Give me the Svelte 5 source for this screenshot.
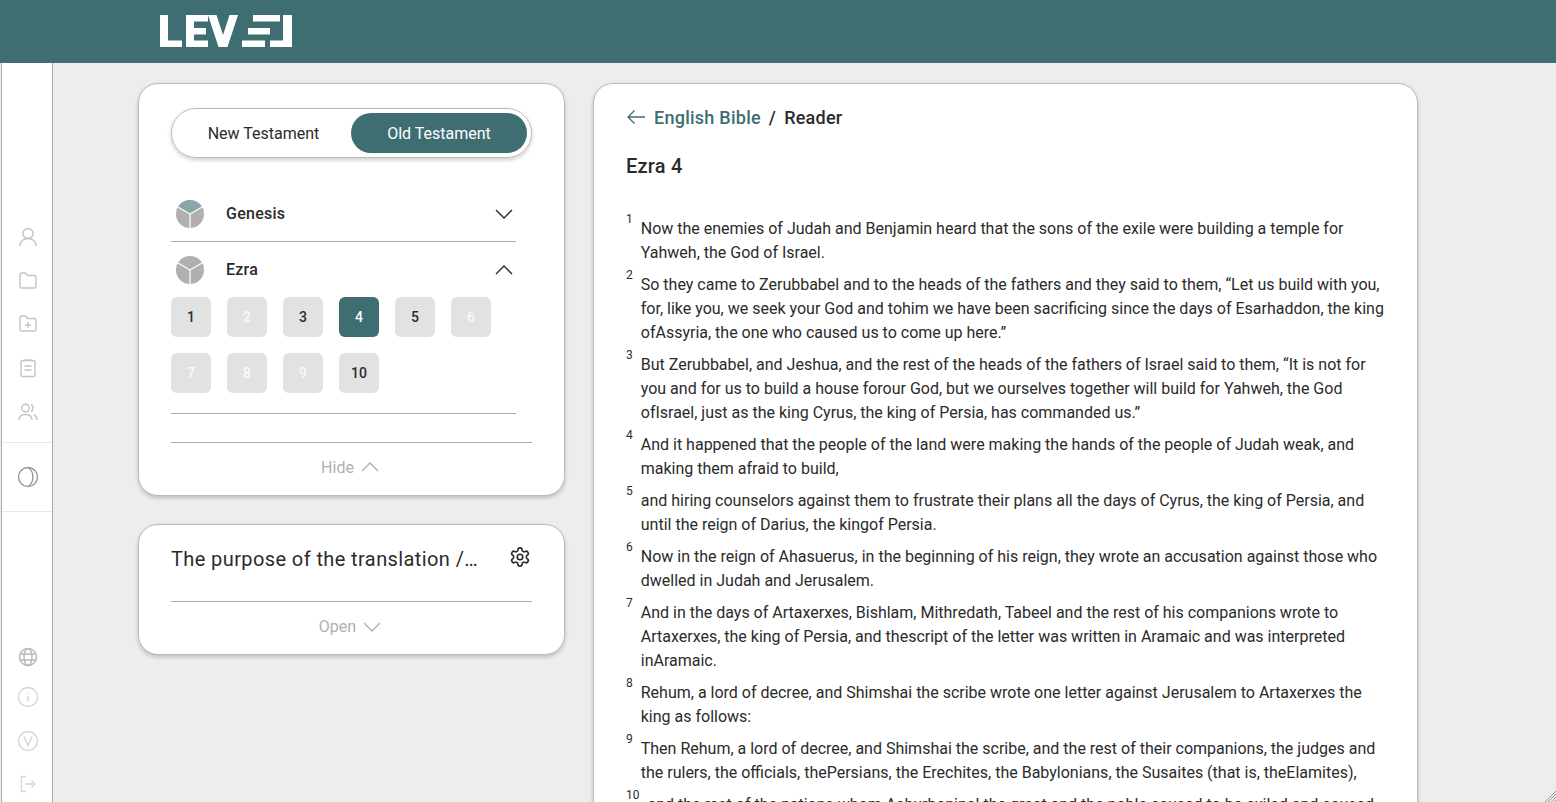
<script>
    const chapters = [
        { n: 1, state: 'on' }, { n: 2, state: 'off' }, { n: 3, state: 'on' }, { n: 4, state: 'current' },
        { n: 5, state: 'on' }, { n: 6, state: 'off' }, { n: 7, state: 'off' }, { n: 8, state: 'off' },
        { n: 9, state: 'off' }, { n: 10, state: 'on' }
    ];

    const verses = [
        'Now the enemies of Judah and Benjamin heard that the sons of the exile were building a temple for Yahweh, the God of Israel.',
        'So they came to Zerubbabel and to the heads of the fathers and they said to them, “Let us build with you, for, like you, we seek your God and tohim we have been sacrificing since the days of Esarhaddon, the king ofAssyria, the one who caused us to come up here.”',
        'But Zerubbabel, and Jeshua, and the rest of the heads of the fathers of Israel said to them, “It is not for you and for us to build a house forour God, but we ourselves together will build for Yahweh, the God ofIsrael, just as the king Cyrus, the king of Persia, has commanded us.”',
        'And it happened that the people of the land were making the hands of the people of Judah weak, and making them afraid to build,',
        'and hiring counselors against them to frustrate their plans all the days of Cyrus, the king of Persia, and until the reign of Darius, the kingof Persia.',
        'Now in the reign of Ahasuerus, in the beginning of his reign, they wrote an accusation against those who dwelled in Judah and Jerusalem.',
        'And in the days of Artaxerxes, Bishlam, Mithredath, Tabeel and the rest of his companions wrote to Artaxerxes, the king of Persia, and thescript of the letter was written in Aramaic and was interpreted inAramaic.',
        'Rehum, a lord of decree, and Shimshai the scribe wrote one letter against Jerusalem to Artaxerxes the king as follows:',
        'Then Rehum, a lord of decree, and Shimshai the scribe, and the rest of their companions, the judges and the rulers, the officials, thePersians, the Erechites, the Babylonians, the Susaites (that is, theElamites),',
        'and the rest of the nations whom Ashurbanipal the great and the noble caused to be exiled and caused to settle in the cities of Samaria.'
    ];
</script>

<div class="page">
    <header class="topbar">
        <svg class="logo" width="134" height="34" viewBox="0 0 134 34" fill="#fff">
            <path d="M0 1h8v25.500h14v6.500H0z" />
            <path d="M26 1h22v6.500H34v6.500h12v6.500H34v6h14v6.500H26z" />
            <path d="M48 1h8.500l6.500 20L69.500 1H78L67.500 33h-9z" />
            <rect x="93" y="1" width="27" height="6.500" />
            <rect x="88" y="14" width="22" height="6.500" />
            <rect x="82" y="26.500" width="23" height="6.500" />
            <path d="M123 1h9v32h-22v-6.500h13z" />
        </svg>
    </header>

    <div class="body">
        <nav class="rail">
            <div class="rail-group top">
                <div class="rail-item">
                    <svg width="20" height="20" viewBox="0 0 20 20"><circle cx="10" cy="6.500" r="5" /><path d="M2 19c0-4.500 3.500-7.500 8-7.500s8 3 8 7.500" /></svg>
                </div>
                <div class="rail-item">
                    <svg width="20" height="20" viewBox="0 1 20 20"><path d="M2 5c0-1 .6-2 2-2h3.500l2 2.500H16c1.200 0 2 .8 2 2V16c0 1.200-.8 2-2 2H4c-1.400 0-2-.8-2-2z" /></svg>
                </div>
                <div class="rail-item">
                    <svg width="20" height="20" viewBox="0 1 20 20"><path d="M2 5c0-1 .6-2 2-2h3.500l2 2.500H16c1.200 0 2 .8 2 2V16c0 1.200-.8 2-2 2H4c-1.400 0-2-.8-2-2z" /><path d="M10 9v6M7 12h6" /></svg>
                </div>
                <div class="rail-item">
                    <svg width="20" height="20" viewBox="0 0 20 20"><rect x="3" y="2.500" width="14" height="16" rx="2" /><path d="M7 1v2M10 1v2M13 1v2M6.500 8h7M6.500 12h7" /></svg>
                </div>
                <div class="rail-item">
                    <svg width="20" height="20" viewBox="0 0 20 20"><circle cx="7.500" cy="6" r="3.800" /><path d="M1 18c0-4 2.500-5.500 6.500-5.500S14 14 14 18" /><path d="M13 2.500c2.500.5 2.800 5.700 0 7M16 13c2 .8 3 2.500 3 5" /></svg>
                </div>
            </div>

            <div class="rail-theme">
                <svg width="22" height="22" viewBox="0 0 22 22"><circle cx="11" cy="11" r="9.500" /><path d="M11 1.500c6.500 3.500 6.500 15.500 0 19" /></svg>
            </div>

            <div class="rail-group bottom">
                <div class="rail-item globe">
                    <svg width="20" height="20" viewBox="0 0 20 20"><circle cx="10" cy="10" r="8.500" /><ellipse cx="10" cy="10" rx="4" ry="8.500" /><path d="M2 7h16M2 13h16" /></svg>
                </div>
                <div class="rail-item faint">
                    <svg width="22" height="22" viewBox="0 0 22 22"><circle cx="11" cy="11" r="9.500" /><path d="M11 10v5.500M11 6.500v1.300" /></svg>
                </div>
                <div class="rail-item faint tall">
                    <svg width="22" height="22" viewBox="0 0 22 22"><circle cx="11" cy="11" r="9.500" /><path d="M7 6.500l4 9 4-9" /></svg>
                </div>
                <div class="rail-item faint last">
                    <svg width="20" height="20" viewBox="0 0 20 20"><path d="M8 2.500H3.500v15H8M7 10h10M13.500 6.500L17 10l-3.500 3.500" /></svg>
                </div>
            </div>
        </nav>

        <main class="content">
            <div class="side">
                <section class="card books">
                    <div class="toggle">
                        <span class="toggle-opt">New Testament</span>
                        <span class="toggle-opt active">Old Testament</span>
                    </div>

                    <div class="book genesis">
                        <svg class="cube" width="28" height="28" viewBox="0 0 28 28">
                            <circle cx="14" cy="14" r="14" fill="#b0b0b0" />
                            <path d="M14 14L1.900 7A14 14 0 0 1 26.100 7Z" fill="#86a8aa" />
                            <path d="M14 14L1.900 7M14 14L26.100 7M14 14V28" stroke="#fff" stroke-width="1.200" fill="none" />
                        </svg>
                        <span class="book-name">Genesis</span>
                        <svg class="chev" width="18" height="10" viewBox="0 0 18 10"><path d="M1 1l8 8 8-8" /></svg>
                    </div>

                    <div class="book ezra">
                        <svg class="cube" width="28" height="28" viewBox="0 0 28 28">
                            <circle cx="14" cy="14" r="14" fill="#b0b0b0" />
                            <path d="M14 14L1.900 7M14 14L26.100 7M14 14V28" stroke="#fff" stroke-width="1.200" fill="none" />
                        </svg>
                        <span class="book-name">Ezra</span>
                        <svg class="chev" width="18" height="10" viewBox="0 0 18 10"><path d="M1 9l8-8 8 8" /></svg>
                    </div>

                    <div class="chapters">
                        {#each chapters as c}
                            <div class="chip {c.state}">{c.n}</div>
                        {/each}
                    </div>

                    <div class="footer-action hide">
                        <span>Hide</span>
                        <svg width="18" height="10" viewBox="0 0 18 10"><path d="M1 9l8-8 8 8" /></svg>
                    </div>
                </section>

                <section class="card purpose">
                    <div class="purpose-head">
                        <span class="purpose-title">The purpose of the translation / interpretation</span>
                        <svg class="gear" width="22" height="22" viewBox="0 0 24 24">
                            <path d="M12.220 2h-.44a2 2 0 0 0-2 2v.18a2 2 0 0 1-1 1.730l-.43.25a2 2 0 0 1-2 0l-.15-.08a2 2 0 0 0-2.730.73l-.22.38a2 2 0 0 0 .73 2.730l.15.1a2 2 0 0 1 1 1.720v.51a2 2 0 0 1-1 1.740l-.15.09a2 2 0 0 0-.73 2.730l.22.38a2 2 0 0 0 2.730.73l.15-.08a2 2 0 0 1 2 0l.43.25a2 2 0 0 1 1 1.730V20a2 2 0 0 0 2 2h.44a2 2 0 0 0 2-2v-.18a2 2 0 0 1 1-1.730l.43-.25a2 2 0 0 1 2 0l.15.08a2 2 0 0 0 2.730-.73l.22-.39a2 2 0 0 0-.73-2.730l-.15-.08a2 2 0 0 1-1-1.740v-.5a2 2 0 0 1 1-1.740l.15-.09a2 2 0 0 0 .73-2.730l-.22-.38a2 2 0 0 0-2.730-.73l-.15.08a2 2 0 0 1-2 0l-.43-.25a2 2 0 0 1-1-1.730V4a2 2 0 0 0-2-2z" />
                            <circle cx="12" cy="12" r="3" />
                        </svg>
                    </div>
                    <div class="footer-action open">
                        <span>Open</span>
                        <svg width="18" height="10" viewBox="0 0 18 10"><path d="M1 1l8 8 8-8" /></svg>
                    </div>
                </section>
            </div>

            <section class="card reader">
                <div class="crumbs">
                    <svg class="back" width="20" height="16" viewBox="0 0 20 16"><path d="M19 8H2M8.500 1.500L2 8l6.500 6.500" /></svg>
                    <span class="crumb-link">English Bible</span>
                    <span class="crumb-sep">/</span>
                    <span class="crumb-cur">Reader</span>
                </div>
                <h1 class="chapter-title">Ezra 4</h1>
                <div class="verses">
                    {#each verses as text, i}
                        <div class="verse">
                            <span class="verse-no">{i + 1}</span>
                            <p>{text}</p>
                        </div>
                    {/each}
                </div>
            </section>
        </main>
    </div>

    <svg class="resize" width="12" height="12" viewBox="0 0 12 12"><path d="M12 1L1 12M12 4L4 12M12 7L7 12M12 10L10 12" /></svg>
</div>

<style>
    :global(body) {
        margin: 0;
        background: #ededed;
        font-family: Roboto, "Liberation Sans", sans-serif;
        color: #2b2b2b;
        overflow: hidden;
    }
    .page {
        height: 802px;
        display: flex;
        flex-direction: column;
        overflow: hidden;
    }
    .topbar {
        flex: 0 0 63px;
        background: #3e6e72;
        padding: 14px 0 0 160px;
        box-sizing: border-box;
    }
    .logo {
        display: block;
    }
    .body {
        flex: 1;
        display: flex;
        min-height: 0;
    }

    .rail {
        width: 50px;
        margin-left: 1px;
        background: #fff;
        border-left: 1px solid #aaa;
        border-right: 1px solid #aaa;
        display: flex;
        flex-direction: column;
        overflow: hidden;
    }
    .rail > * {
        flex-shrink: 0;
    }
    .rail svg {
        fill: none;
        stroke: #c4c4c4;
        stroke-width: 1.4;
    }
    .rail-group.top {
        padding-top: 152px;
    }
    .rail-group.bottom {
        padding-top: 125px;
    }
    .rail-item {
        display: flex;
        align-items: center;
        justify-content: center;
        padding-left: 1px;
    }
    .rail-group.top .rail-item {
        height: 43.800px;
    }
    .rail-group.bottom .rail-item {
        height: 40px;
    }
    .rail-group.bottom .rail-item.tall {
        height: 48px;
    }
    .rail-group.bottom .rail-item.last {
        height: 38px;
    }
    .rail-item.globe svg {
        stroke: #b8b8b8;
    }
    .rail-item.faint svg {
        stroke: #d6d6d6;
    }
    .rail-theme {
        height: 68px;
        margin-top: 8px;
        border-top: 1px solid #e8e8e8;
        border-bottom: 1px solid #e8e8e8;
        display: flex;
        align-items: center;
        justify-content: center;
        padding-left: 1px;
    }
    .rail .rail-theme svg {
        stroke: #999;
    }

    .content {
        flex: 1;
        display: flex;
        gap: 28px;
        padding: 20px 0 0 85px;
        min-width: 0;
    }
    .side {
        width: 427px;
        display: flex;
        flex-direction: column;
        gap: 28px;
    }
    .card {
        background: #fff;
        border: 1px solid #bbb;
        border-radius: 20px;
        box-shadow: 0 2px 4px rgba(0, 0, 0, 0.2);
        box-sizing: border-box;
    }

    .books {
        height: 413px;
        padding: 24px 32px 0;
    }
    .toggle {
        height: 50px;
        box-sizing: border-box;
        border: 1px solid #bbb;
        border-radius: 25px;
        box-shadow: 0 2px 4px rgba(0, 0, 0, 0.2);
        display: flex;
        align-items: center;
        padding: 0 4px;
    }
    .toggle-opt {
        flex: 0 0 175px;
        height: 40px;
        border-radius: 20px;
        display: flex;
        align-items: center;
        justify-content: center;
        font-size: 16px;
    }
    .toggle-opt.active {
        flex-basis: 176px;
        background: #3e6e72;
        color: #fff;
    }

    .book {
        width: 345px;
        height: 55px;
        display: flex;
        align-items: center;
        box-sizing: border-box;
        padding: 0 3px 0 5px;
    }
    .book.genesis {
        height: 56px;
        margin-top: 28px;
        border-bottom: 1px solid #aaa;
    }
    .book-name {
        flex: 1;
        margin-left: 22px;
        font-size: 16px;
        font-weight: 500;
        letter-spacing: 0.25px;
    }
    .chev {
        fill: none;
        stroke: #2b2b2b;
        stroke-width: 1.400;
    }
    .chapters {
        width: 345px;
        box-sizing: border-box;
        display: grid;
        grid-template-columns: repeat(6, 40px);
        gap: 16px;
        padding-bottom: 20px;
        border-bottom: 1px solid #aaa;
    }
    .chip {
        height: 40px;
        border-radius: 6px;
        background: #e2e2e2;
        display: flex;
        align-items: center;
        justify-content: center;
        font-size: 14px;
        font-weight: 500;
    }
    .chip.off {
        color: #f8f8f8;
    }
    .chip.current {
        background: #3e6e72;
        color: #fff;
    }

    .footer-action {
        display: flex;
        align-items: center;
        justify-content: center;
        gap: 7px;
        padding-right: 3px;
        color: #b0b0b0;
        font-size: 16px;
        height: 49px;
    }
    .footer-action svg {
        fill: none;
        stroke: #b0b0b0;
        stroke-width: 1.400;
    }
    .footer-action.hide {
        margin-top: 28px;
        height: 48px;
        border-top: 1px solid #aaa;
    }

    .purpose {
        height: 131px;
        padding: 0 32px;
    }
    .purpose-head {
        height: 77px;
        box-sizing: border-box;
        display: flex;
        align-items: flex-start;
        justify-content: space-between;
        border-bottom: 1px solid #aaa;
    }
    .purpose-title {
        width: 307px;
        margin-top: 20px;
        font-size: 20px;
        line-height: 28px;
        letter-spacing: 0.4px;
        white-space: nowrap;
        overflow: hidden;
        text-overflow: ellipsis;
    }
    .gear {
        margin-top: 21px;
        margin-right: 1px;
        fill: none;
        stroke: #2b2b2b;
        stroke-width: 1.800;
    }

    .reader {
        width: 825px;
        height: 760px;
        padding: 0 32px;
        border-radius: 20px 20px 0 0;
    }
    .crumbs {
        height: 66px;
        display: flex;
        align-items: center;
        font-size: 18px;
        font-weight: 500;
        letter-spacing: 0.25px;
    }
    .back {
        fill: none;
        stroke: #3e6e72;
        stroke-width: 1.300;
        margin-right: 8px;
    }
    .crumb-link {
        color: #3e6e72;
    }
    .crumb-sep {
        margin: 0 8px;
    }
    .chapter-title {
        margin: 0;
        font-size: 20px;
        font-weight: 500;
        letter-spacing: 0.25px;
        line-height: 28px;
        padding-top: 2px;
    }
    .verses {
        margin-top: 37px;
    }
    .verse {
        display: flex;
        gap: 8px;
        margin-bottom: 8px;
    }
    .verse p {
        margin: 0;
        font-size: 16px;
        line-height: 24px;
        color: #2b2b2b;
    }
    .verse-no {
        font-size: 12px;
        line-height: 14px;
        margin-top: -5px;
    }

    .resize {
        position: fixed;
        right: 0;
        bottom: 0;
        fill: none;
        stroke: #999;
        stroke-width: 1;
    }
</style>
